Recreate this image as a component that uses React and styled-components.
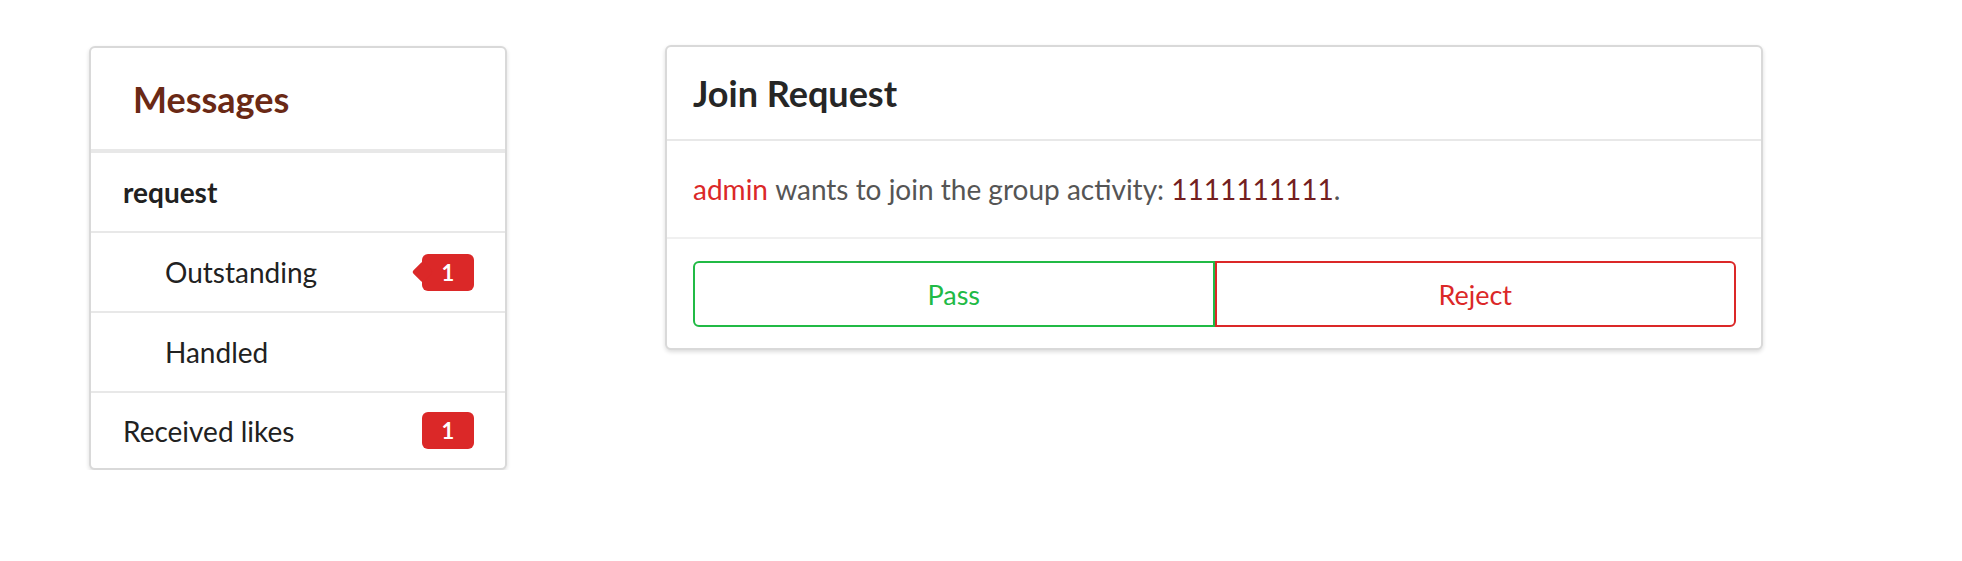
import React from "react";
import styled, { createGlobalStyle } from "styled-components";

const GlobalStyle = createGlobalStyle`
  body {
    margin: 0;
    background: #ffffff;
    font-family: Lato, "Open Sans", sans-serif;
  }
`;

const Page = styled.div`
  display: flex;
  align-items: flex-start;
  gap: 158px;
  padding: 45px 0 0 89px;
`;

const Card = styled.div`
  box-sizing: border-box;
  flex: none;
  width: ${(p) => p.width}px;
  margin-top: ${(p) => p.offset || 0}px;
  background: #fff;
  border: 2px solid #d9d9d9;
  border-radius: 6px;
  box-shadow: 0 2px 4px rgba(0, 0, 0, 0.14);
`;

const MenuHeader = styled.div`
  box-sizing: border-box;
  height: 103px;
  display: flex;
  align-items: center;
  padding-left: 42px;
  font-size: 36px;
  font-weight: 700;
  color: #6a2915;
  border-bottom: 2px solid #e8e8e8;
`;

const MenuItem = styled.div`
  box-sizing: border-box;
  height: ${(p) => (p.last ? 77 : 80)}px;
  display: flex;
  align-items: center;
  justify-content: space-between;
  padding: 0 31px 0 ${(p) => (p.sub ? 74 : 32)}px;
  font-size: 28px;
  font-weight: ${(p) => (p.bold ? 700 : 400)};
  color: #212121;
  border-top: ${(p) => (p.first ? "none" : "2px solid #e8e8e8")};
`;

const Badge = styled.span`
  position: relative;
  display: inline-flex;
  align-items: center;
  justify-content: center;
  width: 52px;
  height: 37px;
  border-radius: 6px;
  background: #db2828;
  color: #fff;
  font-size: 22px;
  font-weight: 700;

  ${(p) =>
    p.pointing &&
    `
    &::before {
      content: "";
      position: absolute;
      left: -7px;
      top: 50%;
      width: 15px;
      height: 15px;
      background: #db2828;
      transform: translateY(-50%) rotate(45deg);
      border-radius: 2px;
    }
  `}
`;

const BadgeText = styled.span`
  position: relative;
`;

const CardHeader = styled.div`
  box-sizing: border-box;
  height: 94px;
  display: flex;
  align-items: center;
  padding-left: 26px;
  font-size: 36px;
  font-weight: 700;
  color: #262626;
  border-bottom: 2px solid #e8e8e8;
`;

const CardBody = styled.div`
  box-sizing: border-box;
  height: 98px;
  display: flex;
  align-items: center;
  padding-left: 26px;
  font-size: 28px;
  color: #555555;
  border-bottom: 2px solid #f0f0f0;
`;

const UserName = styled.span`
  color: #db2828;
  white-space: pre;
`;

const Activity = styled.span`
  color: #741f1f;
`;

const Actions = styled.div`
  display: flex;
  padding: 22px 25px 21px 26px;
`;

const ActionButton = styled.button`
  flex: 1;
  height: 66px;
  background: #fff;
  border: 2px solid ${(p) => p.color};
  color: ${(p) => p.color};
  font-family: Lato, "Open Sans", sans-serif;
  font-size: 27px;
  cursor: pointer;
  border-radius: ${(p) => (p.side === "left" ? "6px 0 0 6px" : "0 6px 6px 0")};
`;

export default function App() {
  return (
    <>
      <GlobalStyle />
      <Page>
        <Card width={418} offset={1}>
          <MenuHeader>Messages</MenuHeader>
          <MenuItem bold>request</MenuItem>
          <MenuItem sub>
            Outstanding
            <Badge pointing>
              <BadgeText>1</BadgeText>
            </Badge>
          </MenuItem>
          <MenuItem sub>Handled</MenuItem>
          <MenuItem last>
            Received likes
            <Badge>
              <BadgeText>1</BadgeText>
            </Badge>
          </MenuItem>
        </Card>

        <Card width={1098}>
          <CardHeader>Join Request</CardHeader>
          <CardBody>
            <UserName>admin </UserName>
            wants to join the group activity:&nbsp;<Activity>1111111111</Activity>.
          </CardBody>
          <Actions>
            <ActionButton color="#21ba45" side="left">
              Pass
            </ActionButton>
            <ActionButton color="#db2828" side="right">
              Reject
            </ActionButton>
          </Actions>
        </Card>
      </Page>
    </>
  );
}
